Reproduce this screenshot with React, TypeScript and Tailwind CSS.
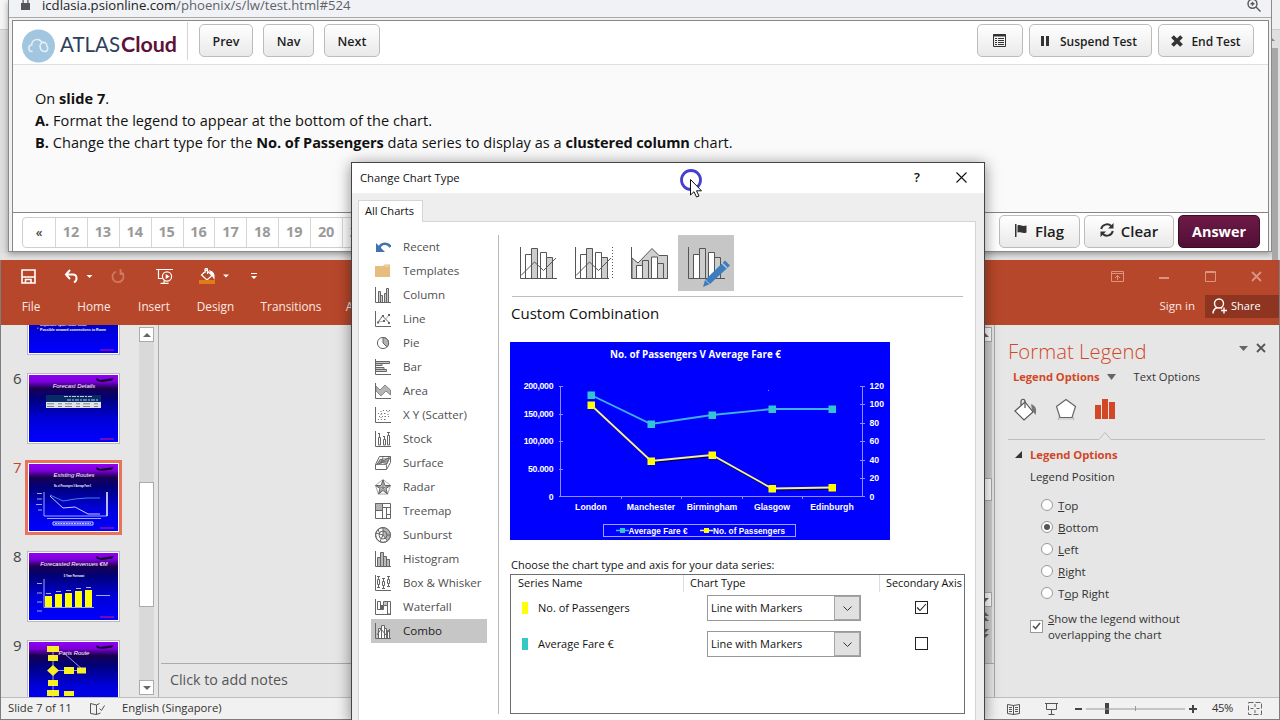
import type { ReactNode } from "react";
import clsx from "clsx";

const PAGES = ["12", "13", "14", "15", "16", "17", "18", "19", "20", "21"];

const RIBBON_TABS = [
  { label: "File", className: "w-[58px]" },
  { label: "Home", className: "w-[68px]" },
  { label: "Insert", className: "w-[52px]" },
  { label: "Design", className: "w-[71px]" },
  { label: "Transitions", className: "w-[80px]" },
  { label: "Animations", className: "w-[92px]" },
];

const CITIES = ["London", "Manchester", "Birmingham", "Glasgow", "Edinburgh"];

const SERIES = [
  { name: "No. of Passengers", swatch: "bg-[#ffff00]", secondary: true },
  { name: "Average Fare €", swatch: "bg-[#33c9c9]", secondary: false },
];

const POSITIONS: [string, string, string][] = [
  ["", "T", "op"],
  ["", "B", "ottom"],
  ["", "L", "eft"],
  ["", "R", "ight"],
  ["T", "o", "p Right"],
];

/* ---------- chart type icons ---------- */

const AXES = <path d="M.5 0v15.5H16" />;

const CHART_TYPES: { label: string; icon: ReactNode }[] = [
  {
    label: "Recent",
    icon: (
      <>
        <path d="M1 4v9h9L7 10 4 7z" fill="#3f74ad" stroke="none" />
        <path d="M4 9.500c2-6 9-6 11.500-1.500" stroke="#3f74ad" strokeWidth="2.600" />
      </>
    ),
  },
  {
    label: "Templates",
    icon: (
      <g stroke="none">
        <path fill="#e6bd7c" d="M0 3h8l1.500-1.500H15V14H0z" />
        <path fill="#f4dcb0" d="M9 3.500h5v-1H10z" />
      </g>
    ),
  },
  {
    label: "Column",
    icon: (
      <>
        {AXES}
        <path fill="#c9c9c9" d="M3.500 15V4.500h2V15M5.500 15V8.500h2V15M9.500 15V6.500h2V15M11.500 15V1.500h2V15" />
      </>
    ),
  },
  {
    label: "Line",
    icon: (
      <>
        {AXES}
        <path d="M2.500 12l5-7 7 7" />
        <path stroke="#a3a3a3" d="M3 11l6-1 5-6" />
        <path fill="#666" stroke="none" d="M2 10.500h2v2H2zM7 4h2v2H7zM13 11h2v2h-2zM13 3h2v2h-2zM8 9h2v2H8z" />
      </>
    ),
  },
  {
    label: "Pie",
    icon: (
      <>
        <circle cx="8" cy="8" r="5.600" fill="#fff" />
        <path fill="#b3b3b3" d="M8 2.400V8l4 4A5.600 5.600 0 0 0 8 2.400z" />
      </>
    ),
  },
  {
    label: "Bar",
    icon: (
      <>
        {AXES}
        <path fill="#c9c9c9" d="M1 2.500h13.500v2H1M1 4.500h6v2H1M1 8.500h8v2H1M1 10.500h10.500v2H1" />
      </>
    ),
  },
  {
    label: "Area",
    icon: (
      <>
        <path fill="#b5b5b5" stroke="#888" d="M1 3l4 4 5-5 5.500 5v5L11 8l-5 5-5-5z" />
        {AXES}
      </>
    ),
  },
  {
    label: "X Y (Scatter)",
    icon: (
      <>
        {AXES}
        <path
          stroke="#777"
          strokeDasharray="1 2"
          d="M3 12.500h9M4 9.500h11M3 6.500h8M8 3.500h8M6 11v-8M10 13v-9M13 8v-6"
        />
      </>
    ),
  },
  {
    label: "Stock",
    icon: (
      <>
        {AXES}
        <path fill="#fff" d="M3.500 6.500h2V14h-2zM8.500 8.500h2V14h-2zM12.500 4.500h2V14h-2z" />
        <path d="M4.500 2v4M9.500 5v3M13.500 1v3M3 2.500h2M8 5.500h2M12 1.500h3" />
      </>
    ),
  },
  {
    label: "Surface",
    icon: (
      <>
        <path fill="#fff" d="M.5 9.500l4-8h11v6l-4 7H.5z" />
        <path fill="#bbb" d="M2 9.500l3-5 4 1 5-3-2 6-5-1z" />
        <path d="M.5 9.500h11v5M11.500 9.500l4-8M5 4.500l8-1M4 7l8-1M8 2L6 9" strokeWidth=".8" />
      </>
    ),
  },
  {
    label: "Radar",
    icon: (
      <>
        <path d="M8 .5l7.500 5.800-2.800 8.700H3.300L.5 6.300z" strokeWidth=".7" stroke="#888" />
        <path fill="#c4c4c4" d="M8 1l2 5.500 5.500 0L11 9.500l1.500 5.500L8 11.500 3.500 15 5 9.500.5 6.500 6 6.500z" />
        <path d="M8 1v8M1 6.500L8 9l7-2.500M4 14.500L8 9l4 5.500" strokeWidth=".7" />
      </>
    ),
  },
  {
    label: "Treemap",
    icon: (
      <>
        <path fill="#fff" d="M.5 .5h15v15H.5z" />
        <path fill="#b3b3b3" d="M.5 .5h7v7h-7z" />
        <path d="M7.500 .5v15M.5 7.500h7M7.500 4.500h8M11.500 4.500v11M11.500 11.500h4" />
      </>
    ),
  },
  {
    label: "Sunburst",
    icon: (
      <>
        <circle cx="8" cy="8" r="7.400" fill="#fff" />
        <path fill="#b3b3b3" stroke="none" d="M8 .6A7.400 7.400 0 0 1 12.500 14L8 8z" />
        <circle cx="8" cy="8" r="7.400" />
        <circle cx="8" cy="8" r="4" />
        <path d="M8 .6V8l4.500 6M8 8L5 14.500M8 8L1 6M4.500 6L3 2.500M12 8h3.400" />
      </>
    ),
  },
  {
    label: "Histogram",
    icon: (
      <>
        {AXES}
        <path fill="#b9b9b9" d="M2.500 15V6.500h3V15M5.500 15V1.500h3V15M8.500 15V5.500h3V15M11.500 15V8.500h3V15" />
      </>
    ),
  },
  {
    label: "Box & Whisker",
    icon: (
      <>
        {AXES}
        <path d="M2 1.500h3M3.500 2v2M3.500 10v3M2 12.500h3M7 3.500h3M8.500 4v2M8.500 11v2M7 13.500h3M12 1.500h3M13.500 2v2M13.500 9v3M12 11.500h3" />
        <path fill="#fff" d="M2.500 4.500h2v5h-2zM7.500 6.500h2v4h-2zM12.500 4.500h2v4h-2z" />
      </>
    ),
  },
  {
    label: "Waterfall",
    icon: (
      <>
        {AXES}
        <path fill="#fff" d="M2.500 2.500h3v8h-3zM12.500 2.500h3V15h-3z" />
        <path fill="#666" d="M5.500 6.500h3v4h-3z" />
        <path fill="#c4c4c4" d="M8.500 2.500h4v4h-4z" />
      </>
    ),
  },
  {
    label: "Combo",
    icon: (
      <>
        {AXES}
        <path fill="#fff" d="M3.500 15V5.500h3V15M6.500 15V2.500h3V15M9.500 15V5.500h2V15M12.500 15V7.500h2V15" />
        <path d="M2 12l4-6 5 6 4-6" />
      </>
    ),
  },
];

/* ---------- shared bits ---------- */

const GREY_BTN = "border-[#bcbcbc] bg-linear-to-b from-white to-[#e9e9e9]";

function WebButton({ children, className }: { children: ReactNode; className?: string }) {
  return (
    <button
      className={clsx(
        "flex h-[33px] items-center justify-center rounded-[5px] border font-semibold text-[#1d1d1d]",
        className,
      )}
    >
      {children}
    </button>
  );
}

function ScrollArrow({ down }: { down?: boolean }) {
  return (
    <div className="flex h-[15px] w-[15px] shrink-0 items-center justify-center border border-[#ababab] bg-white">
      <svg width="8" height="4" className={down ? "rotate-180" : ""}>
        <path d="M0 4L4 0l4 4z" fill="#666" />
      </svg>
    </div>
  );
}

/* ---------- exam window ---------- */

function Logo() {
  return (
    <svg width="160" height="38" viewBox="0 0 160 38">
      <circle cx="18.500" cy="20" r="16.500" fill="#a3c6e0" />
      <g fill="none" stroke="#e4f0f8" strokeWidth="1.500" strokeLinecap="round">
        <path d="M12 25.500c-4 0-4.500-6-.3-6.500 0-6 8-7.500 10-2.500 3-1 5.500 1 5 3.500 2 1.500 1 5.500-1.500 5.500-3 0-5-2-5-5" />
        <path d="M20 20.500c0-3 2-4.500 4-4" />
      </g>
      <g fontFamily="Lato" fontSize="20.500">
        <text x="40" y="26" fill="#2d3f5c" textLength="60" lengthAdjust="spacingAndGlyphs">
          ATLAS
        </text>
        <text x="101" y="26" fill="#5d1238" fontWeight="bold" textLength="56" lengthAdjust="spacingAndGlyphs">
          Cloud
        </text>
      </g>
    </svg>
  );
}

function ExamHeader() {
  return (
    <header className="flex h-[44px] items-start border-b border-[#e0e0e0] bg-white text-[12.500px]">
      <div className="ml-[7px] mt-[5px] w-[158px]">
        <Logo />
      </div>
      <div className="ml-[9px] mt-px h-[38px] w-px bg-[#d4d4d4]" />
      <div className="ml-[11px] mt-[3px] flex">
        <WebButton className={clsx("w-[54px] pt-[3px]", GREY_BTN)}>Prev</WebButton>
        <WebButton className={clsx("ml-[10px] w-[51px] pt-[3px]", GREY_BTN)}>Nav</WebButton>
        <WebButton className={clsx("ml-[10px] w-[56px] pt-[3px]", GREY_BTN)}>Next</WebButton>
      </div>
      <div className="ml-auto mr-[14px] mt-[3px] flex gap-[6px] text-[12px]">
        <WebButton className={clsx("w-[46px] pr-[2px]", GREY_BTN)}>
          <svg width="13" height="13" fill="none" stroke="#333">
            <path d="M.5 .5h12v12H.5z" />
            <path d="M0 1.500h13" strokeWidth="2" />
            <path d="M2 4.500h2M5 4.500h6M2 6.500h2M5 6.500h6M2 8.500h2M5 8.500h6M2 10.500h2M5 10.500h6" />
          </svg>
        </WebButton>
        <WebButton className={clsx("w-[123px] pt-[2px]", GREY_BTN)}>
          <svg width="8" height="10" fill="#333" className="-mt-px -ml-[3px] mr-[11px]">
            <path d="M0 0h3v10H0zM5 0h3v10H5z" />
          </svg>
          Suspend Test
        </WebButton>
        <WebButton className={clsx("w-[96px] pt-[2px]", GREY_BTN)}>
          <svg width="12" height="12" className="-mt-[2px] mr-[8px]" stroke="#333" strokeWidth="3.800">
            <path d="M1.500 1.500l9 9M10.500 1.500l-9 9" />
          </svg>
          End Test
        </WebButton>
      </div>
    </header>
  );
}

function ExamFooter() {
  return (
    <footer className="flex h-[39px] items-start border-t border-[#858585] bg-white">
      <div className="ml-[9px] mt-[4px] flex h-[31px] rounded-l-[4px] border border-[#cfcfcf] text-[14.500px] font-bold text-[#9a9a9a]">
        <span className="flex w-[32px] items-center justify-center text-[12px] font-semibold text-[#444]">«</span>
        {PAGES.map((page) => (
          <span
            key={page}
            className="flex w-[31.900px] items-center justify-center border-l border-[#d6d6d6] pb-px pr-px tracking-[-0.100px]"
          >
            {page}
          </span>
        ))}
      </div>
      <div className="ml-auto mr-[8px] mt-[2px] flex gap-[4px] text-[15px]">
        <WebButton className={clsx("w-[81px]", GREY_BTN)}>
          <svg width="12" height="13" className="-mt-[2px] mr-[8px]" fill="#333">
            <path d="M0 0h1.500v13H0zM2.500 1.500c3-1.500 4 1.500 9 0v7c-4 1.500-6-1-9 0z" />
          </svg>
          Flag
        </WebButton>
        <WebButton className={clsx("w-[90px]", GREY_BTN)}>
          <svg width="14" height="14" className="-mt-[3px] mr-[7px]" fill="none" stroke="#333" strokeWidth="2">
            <path d="M1.200 6a6 6 0 0 1 10-3M12.800 8a6 6 0 0 1-10 3" />
            <path d="M13.500 0v5.500H8zM.5 14V8.500H6z" fill="#333" stroke="none" />
          </svg>
          Clear
        </WebButton>
        <WebButton className="w-[82px] border-[#3f0c28] bg-linear-to-b from-[#6d1a45] to-[#511036]">
          <span className="text-[14.400px] font-bold text-white">Answer</span>
        </WebButton>
      </div>
    </footer>
  );
}

function ExamWindow() {
  return (
    <section className="flex h-[260px] bg-[#e3e3e3]">
      <div className="h-[253px] w-[8px] shrink-0 bg-[#dedede]">
        <div className="h-[30px] border-b border-[#ccc] bg-[#f5f5f5]" />
      </div>
      <div className="h-[252px] w-[1264px] border-x border-b border-[#8a8a8a] bg-[#f0f1f2] shadow-[0_2px_6px_rgba(0,0,0,0.35)]">
        <div className="flex h-[18px] items-start border-b border-[#a9a9a9] bg-[#f0f2f6] pl-[12px] text-[13.150px] leading-[10px] text-[#5f6368]">
          <svg width="9" height="10" className="mr-[12px]" fill="#555">
            <path d="M0 3h9v7H0zM1.500 0h1.200v3H1.500zM6.300 0h1.200v3H6.300z" />
          </svg>
          <span>
            <span className="text-[#222]">icdlasia.psionline.com</span>/phoenix/s/lw/test.html#524
          </span>
          <svg width="14" height="13" className="ml-auto mr-[10px]" fill="none" stroke="#555" strokeWidth="1.400">
            <circle cx="5.500" cy="3.800" r="4.500" />
            <path d="M9 7l4.500 4.500M3.500 3.800h4M5.500 1.800v4" />
          </svg>
        </div>
        <div className="ml-[3px] mr-[2px] mt-[2px] border border-b-0 border-[#888]">
          <ExamHeader />
          <main className="h-[147px] bg-[#fafafa] pl-[22px] pt-[22px] text-[14.550px] leading-[22px] tracking-[0.030px] text-[#111]">
            <p>
              On <b>slide 7</b>.
            </p>
            <p>
              <b>A.</b> Format the legend to appear at the bottom of the chart.
            </p>
            <p>
              <b>B.</b> Change the chart type for the <b className="tracking-[-0.060px]">No. of Passengers</b> data
              series to display as a <b className="tracking-[-0.120px]">clustered column</b> chart.
            </p>
          </main>
          <ExamFooter />
        </div>
      </div>
      <div className="h-[260px] w-[8px] bg-[#e0e0e0]">
        <div className="h-[30px] border-b border-[#ccc] bg-[#f0f0f0]" />
        <svg width="6" height="18" className="block" fill="#888">
          <path d="M0 8l3 3H0z" />
        </svg>
        <div className="h-[212px] w-[6px] bg-[#a8a8a8]" />
      </div>
    </section>
  );
}

/* ---------- presentation window ---------- */

function Ribbon() {
  return (
    <header className="h-[65px] bg-[#b7472a] text-[11.800px] text-[#fbe9e3]">
      <div className="flex h-[32px] items-center pl-[20px]">
        <svg width="15" height="15" fill="none" stroke="#fff" strokeWidth="1.600">
          <path d="M1 1h13v13H1zM1 8h13M4.500 14v-3.500h5.500V14" />
        </svg>
        <svg width="27" height="15" className="ml-[28px] overflow-visible" fill="none" stroke="#fff" strokeWidth="2">
          <path d="M6 1L2 5.500 6 10M2 5.500h7c4 0 5 5.500 1 8" />
          <path d="M22.500 6h6l-3 3z" fill="#fff" stroke="none" />
        </svg>
        <svg width="14" height="15" className="ml-[20px]" fill="none" stroke="#d07862" strokeWidth="1.800">
          <path d="M5 2.500a5.500 5.500 0 1 0 5 .5M9.500 0v5H13" />
        </svg>
        <svg width="17" height="16" className="ml-[31px]" fill="none" stroke="#fff" strokeWidth="1.200">
          <path d="M0 1.500h17M2.500 2v8.500H6M8 13v2M4.500 15.300h8" />
          <circle cx="11" cy="8.500" r="4.600" />
          <path d="M9.700 6v5l4-2.500z" fill="#fff" stroke="none" />
        </svg>
        <svg width="30" height="16" className="ml-[26px]" fill="none" stroke="#fff" strokeWidth="1.200">
          <path d="M2.500 7l5-5 5.500 5.500-5 4.500zM6 5V1.500C6 0 8.500 0 8.500 1.500V6" />
          <path d="M11 3c3 1 4.500 3 4 7l-2-3z" fill="#fff" />
          <path d="M0 12h16v4H0z" fill="#e07b16" stroke="none" />
          <path d="M24 6.500h6l-3 3z" fill="#fff" stroke="none" />
        </svg>
        <svg width="6" height="8" className="ml-[22px]" fill="#fff">
          <path d="M0 1h6v1H0zM0 4h6L3 7z" />
        </svg>
        <div className="ml-auto mr-[17px] flex items-center gap-[35.500px]">
          <svg width="13" height="11" fill="none" stroke="#dc9382">
            <path d="M.5 .5h12v10H.5zM0 2.500h13M6.500 9V4.500M4 7l2.500-2.500L9 7" />
          </svg>
          <svg width="10" height="10">
            <path d="M0 6h10v2H0z" fill="#dc9382" />
          </svg>
          <svg width="11" height="11" fill="none" stroke="#dc9382">
            <path d="M.5 .5h10v10H.5zM0 1.500h11" />
          </svg>
          <svg width="11" height="11" stroke="#dc9382" strokeWidth="1.800">
            <path d="M1 1l9 9M10 1l-9 9" />
          </svg>
        </div>
      </div>
      <div className="mt-px flex h-[26px] items-center">
        <div className="flex pl-px pt-px">
          {RIBBON_TABS.map((tab) => (
            <span key={tab.label} className={clsx("flex justify-center whitespace-nowrap", tab.className)}>
              {tab.label}
            </span>
          ))}
        </div>
        <span className="ml-auto mr-[10px] text-[11.500px]">Sign in</span>
        <div className="flex h-[23px] w-[74px] items-center bg-[#8d3520] pl-[7px] text-[11px] text-white">
          <svg width="16" height="17" className="mr-[3px]" fill="none" stroke="#fff" strokeWidth="1.400">
            <circle cx="7" cy="5.500" r="4.500" />
            <path d="M1 15.500c0-3 2-5 4-6M9 9.500l1 1M12 9.500v6M9 12.500h6" />
          </svg>
          Share
        </div>
      </div>
    </header>
  );
}

function SlideArt({ title, children }: { title?: string; children?: ReactNode }) {
  return (
    <svg width="89" height="67" viewBox="0 0 89 67" className="block">
      <defs>
        <linearGradient id="slide" x1="0" y1="0" x2="0" y2="1">
          <stop offset="0" stopColor="#8f00f5" />
          <stop offset=".1" stopColor="#7d00d8" />
          <stop offset=".2" stopColor="#1a0050" />
          <stop offset=".35" stopColor="#00007a" />
          <stop offset=".65" stopColor="#0000d8" />
          <stop offset="1" stopColor="#0000ff" />
        </linearGradient>
      </defs>
      <rect width="89" height="67" fill="url(#slide)" />
      <path d="M67 3l4 2 14-2-2 2.500-10 1.500-5-1z" fill="#140030" />
      {title && (
        <text
          x="45"
          y="12.500"
          fill="#fff"
          textAnchor="middle"
          fontFamily="Liberation Sans"
          fontStyle="italic"
          fontSize="5.900"
        >
          {title}
        </text>
      )}
      {children}
      <path d="M71 64h14" stroke="#c0108c" strokeWidth="1.200" />
    </svg>
  );
}

function Thumb({ no, active, children }: { no?: string; active?: boolean; children: ReactNode }) {
  return (
    <div className="flex h-[89px] items-start">
      <span
        className={clsx(
          "-mt-[6px] w-[26px] pl-[12px] text-[15px] leading-[22px]",
          active ? "text-[#c8442b]" : "text-[#444]",
        )}
      >
        {no}
      </span>
      <div
        className={clsx(
          "bg-white",
          active ? "-ml-[2px] -mt-[2px] border-[3px] border-[#e8735a] p-px" : "border border-[#b9b9c4] p-px",
        )}
      >
        {children}
      </div>
    </div>
  );
}

function ThumbPane() {
  return (
    <aside className="flex h-[372px] w-[158px] overflow-hidden border-r border-[#ababab]">
      <div className="-mt-[41px] w-[138px]">
        <Thumb>
          <SlideArt>
            <g fill="#fff" fontFamily="Liberation Sans" fontWeight="bold" fontSize="3.600">
              <text x="11" y="40">Important sport route since</text>
              <text x="11" y="44.500">Possible onward connections to Rome</text>
              <path d="M8 41.500h1.500v1.500H8z" fill="#e04090" />
            </g>
          </SlideArt>
        </Thumb>
        <Thumb no="6">
          <SlideArt title="Forecast Details">
            <path d="M17 20h55v7H17z" fill="#0a2c66" />
            <path d="M17 27h55v6H17z" fill="#dfe3ec" />
            <path d="M35 21.500h28M38 25h32" stroke="#cdd8ee" strokeWidth=".9" strokeDasharray="4 1 2 1" />
            <path d="M18 28.800h52M18 31.500h52" stroke="#777" strokeWidth=".9" strokeDasharray="7 4 4 3" />
          </SlideArt>
        </Thumb>
        <Thumb no="7" active>
          <SlideArt title="Existing Routes">
            <text
              x="25"
              y="23"
              fill="#fff"
              fontFamily="Liberation Sans"
              fontWeight="bold"
              fontSize="3"
              textLength="37"
              lengthAdjust="spacingAndGlyphs"
            >
              No. of Passengers V Average Fare €
            </text>
            <g fill="none" stroke="#c9d2ff" strokeWidth=".8">
              <path d="M15 28v24h63V28M8 29.500h5M8 35h5M7 40.500h6M9 46h4M18 54.500h54" />
              <path stroke="#4aa8e8" d="M21 31l13 6 12-2 12-1h13" />
              <path stroke="#fff" d="M21 32l13 12 12-1 13 7h12" />
              <path d="M24 58h40v3H24z" strokeWidth="1" />
              <path d="M26 59.500h36" stroke="#fff" strokeDasharray="2 .7" />
              <path stroke="#fff" d="M78 28v24" strokeWidth="1.200" />
            </g>
          </SlideArt>
        </Thumb>
        <Thumb no="8">
          <SlideArt title="Forecasted Revenues €M">
            <text x="45" y="24" fill="#fff" textAnchor="middle" fontFamily="Liberation Sans" fontWeight="bold" fontSize="2.800">
              5 Year Forecast
            </text>
            <path d="M15 26v28.500h50M8 30.500h5M8 40h5M8 49h5M8 58h5M67 42.500h14" fill="none" stroke="#c9d2ff" strokeWidth=".8" />
            <path fill="#ff0" d="M16 43h7v11h-7zM26 41h7v13h-7zM36 40h7v14h-7zM46 38h7v16h-7zM56 37h7v17h-7z" />
            <path d="M17 40.500h5M27 38.500h5M37 37.500h5M47 35.500h5M57 34.500h5" stroke="#fff" strokeWidth=".7" />
          </SlideArt>
        </Thumb>
        <Thumb no="9">
          <SlideArt title="Paris Route">
            <path d="M24 5v52M24 28.500h30M36 12l17 15" fill="none" stroke="#a9a9ff" strokeWidth=".9" />
            <path
              fill="#f6f025"
              d="M18 4h12v6H18zM19 13h10v6H19zM24 23l6 5.500-6 5.500-6-5.500zM35 25h10v7H35zM48 25.500h9v6h-9zM19 38h10v6H19zM18 48h12v6H18zM35 49h10v5H35z"
            />
          </SlideArt>
        </Thumb>
      </div>
      <div className="mt-[2px] flex h-[368px] w-[15px] flex-col bg-[#d9d9d9]">
        <ScrollArrow />
        <div className="mt-[140px] h-[125px] border border-[#ababab] bg-white" />
        <div className="mt-auto">
          <ScrollArrow down />
        </div>
      </div>
    </aside>
  );
}

function FormatLegendPane() {
  return (
    <aside className="h-[372px] w-[285px] border-l border-[#ababab] pl-[13px] text-[12px] text-[#333]">
      <div className="flex h-[44px] items-center pt-[8px]">
        <h2 className="text-[20.300px] font-light leading-[30px] tracking-[0.060px] text-[#d24726]">Format Legend</h2>
        <svg width="9" height="5" className="-mt-[6px] ml-auto" fill="#666">
          <path d="M0 0h9L4.500 5z" />
        </svg>
        <svg width="10" height="10" className="-mt-[6px] ml-[8px] mr-[13px]" stroke="#555" strokeWidth="1.800">
          <path d="M1 1l8 8M9 1L1 9" />
        </svg>
      </div>
      <div className="flex h-[16px] items-center pl-[5px] text-[11.200px]">
        <b className="tracking-[-0.050px] text-[#d24726]">Legend Options</b>
        <svg width="9" height="6" className="ml-[7px] mr-[18px]" fill="#666">
          <path d="M0 0h9L4.500 6z" />
        </svg>
        Text Options
      </div>
      <div className="flex h-[54px] items-start pl-[6px] pt-[13px]">
        <svg width="25" height="24" fill="#fff" stroke="#555" strokeWidth="1.200">
          <path d="M17 6c5 2 6 5 4.500 11L18 12z" fill="#777" stroke="none" />
          <path d="M1 13l10-9 8 10-9 8z" />
          <path d="M7 7V3.500c0-3 4-3 4 0V10" fill="none" />
        </svg>
        <svg width="22" height="24" className="ml-[16px]" fill="none" stroke="#666" strokeWidth="1.200">
          <path d="M3 22l1-3h14l1 3" fill="#d4d4d4" stroke="#bbb" />
          <path d="M11 1.500l9.500 7-3.500 11H5L1.500 8.500z" fill="#fff" />
        </svg>
        <svg width="21" height="22" className="ml-[18px]" fill="#d24726">
          <path d="M0 7h6v14H0zM7 1h6v20H7zM14 4h6v17h-6z" />
        </svg>
      </div>
      <svg width="258" height="9" fill="none" stroke="#bdbdbd" className="-mt-[8px] block">
        <path d="M0 8.500h91l6-7 6 7h154" />
      </svg>
      <div className="ml-[7px] mt-[5px] flex h-[20px] items-center text-[11.300px]">
        <svg width="7" height="7" fill="#333" className="-mt-[2px] mr-[8px]">
          <path d="M7 0v7H0z" />
        </svg>
        <b className="tracking-[-0.050px] text-[#d24726]">Legend Options</b>
      </div>
      <p className="ml-[22px] mt-[2px] text-[11.400px] leading-[20px]">Legend Position</p>
      <div className="ml-[33px] mt-[8px]">
        {POSITIONS.map(([before, key, after]) => (
          <label key={before + key + after} className="flex h-[22px] items-center">
            <span className="-mt-[2px] mr-[5px] flex size-[12px] items-center justify-center rounded-full border border-[#999] bg-white">
              {key === "B" && <span className="size-[6px] rounded-full bg-[#555]" />}
            </span>
            <span className="text-[11.600px] text-[#333]">
              {before}
              <u>{key}</u>
              {after}
            </span>
          </label>
        ))}
      </div>
      <label className="ml-[22px] mt-[6px] flex items-center text-[11.400px] leading-[16px]">
        <span className="-mt-[2px] mr-[5px] flex size-[13px] items-center justify-center border border-[#999] bg-white">
          <svg width="9" height="8" fill="none" stroke="#555" strokeWidth="1.600">
            <path d="M1 4l2.500 2.500L8 1" />
          </svg>
        </span>
        <span>
          <u>S</u>how the legend without
          <br />
          overlapping the chart
        </span>
      </label>
    </aside>
  );
}

function StatusBar() {
  return (
    <footer className="flex h-[22px] items-center border-t border-[#bdbdbd] bg-[#f1f1f1] text-[11.250px] text-[#333]">
      <span className="ml-[7px] w-[82px]">Slide 7 of 11</span>
      <svg width="15" height="12" fill="none" stroke="#555">
        <path d="M6.500 2v9.500M6.500 2L.5 .5v10l6 1 4-1.500M6.500 2l3-1.500M9.500 5.500l2 2 3-5" />
      </svg>
      <span className="ml-[17px]">English (Singapore)</span>
      <div className="ml-auto mr-[17px] flex items-center">
        <svg width="13" height="12" fill="none" stroke="#555">
          <path d="M.5 1.500l6 1 6-1v9l-6 1-6-1zM6.500 2v10M2 4.500h3M2 6.500h3M2 8.500h3M8 4.500h3M8 6.500h3M8 8.500h3" />
        </svg>
        <svg width="13" height="12" className="ml-[25px]" fill="none" stroke="#555">
          <path d="M0 .5h13M1.500 1v5.500h10V1M6.500 7v4M3.500 11.500h6" />
        </svg>
        <svg width="122" height="13" className="ml-[17px]" fill="#444">
          <path d="M0 6h7v2H0zM30 1h4v11h-4zM114 6h8v2h-8zM117 3h2v8h-2z" />
          <path d="M11 6.500h99v1H11zM60 4h1v5h-1z" fill="#999" />
        </svg>
        <span className="ml-[15px] tracking-[-0.400px]">45%</span>
        <svg width="14" height="13" className="ml-[15px]" fill="none" stroke="#666">
          <path d="M.5 .5h13v12H.5z" strokeDasharray="5 2" />
          <path d="M7 2v3M7 8v3M2.500 6.500h3M8.500 6.500h3" />
        </svg>
      </div>
    </footer>
  );
}

function PresentationWindow() {
  return (
    <section className="h-[460px] border-x border-b border-[#7d7d7d] bg-[#e6e6e6]">
      <Ribbon />
      <div className="flex h-[372px]">
        <ThumbPane />
        <div className="ml-[2px] flex flex-1">
          <div className="flex flex-1 flex-col">
            <div className="flex h-[338px]">
              <div className="ml-auto mr-[2px] mt-[2px] flex w-[15px] flex-col bg-[#cfcfcf]">
                <ScrollArrow />
                <div className="mt-[136px] h-[23px] border border-[#ababab] bg-white" />
                <div className="mt-[91px]">
                  <ScrollArrow down />
                </div>
                <svg width="15" height="32" className="mt-[3px]" fill="#666">
                  <path d="M4 6l4-4 4 4zM4 11l4-4 4 4zM4 19h8l-4 4zM4 24h8l-4 4z" />
                </svg>
              </div>
            </div>
            <p className="border-t border-[#ababab] pl-[9px] text-[14.250px] leading-[32px] text-[#555]">
              Click to add notes
            </p>
          </div>
          <FormatLegendPane />
        </div>
      </div>
      <StatusBar />
    </section>
  );
}

/* ---------- dialog ---------- */

function ComboIcon({ kind }: { kind: "line" | "secondary" | "area" | "custom" }) {
  if (kind === "area") {
    return (
      <svg width="38" height="33" fill="none" stroke="#555">
        <path d="M1 11l6 5L21 1.500 28 8.500h8.500v23H1z" fill="#d0d0d0" />
        <path d="M.5 0v31.500H37" />
        <path d="M5.500 31V18.500h6V31M20.500 31v-21h6V31" fill="#fff" />
        <path d="M11.500 31V13.500h6V31M26.500 31V16.500h6V31" fill="#d0d0d0" />
      </svg>
    );
  }
  return (
    <svg width="43" height="40" fill="none" stroke="#555" className="overflow-visible">
      <path d={kind === "secondary" ? "M.5 0v31.500H34" : "M.5 0v31.500H37"} />
      <path d="M5.500 31V7.500h6V31M20.500 31V5.500h6V31" fill="#fff" />
      <path d="M11.500 31V1.500h6V31M26.500 31V10.500h6V31" fill="#cdcdcd" />
      {kind !== "custom" && <path d="M1 28.500L14.500 15 23.500 23.500 36 11" />}
      {kind === "secondary" && <path d="M37.500 0v32" strokeDasharray="1 2" />}
      {kind === "custom" && (
        <g stroke="none">
          <path d="M15 40l2-7L37 13.500l5 5-20 18.500z" fill="#3d7dbf" />
          <path d="M34 16l5 5" stroke="#c6c6c6" strokeWidth="1.500" />
          <path d="M17.500 33l4.500 4.500" stroke="#c6c6c6" />
        </g>
      )}
    </svg>
  );
}

function PreviewChart() {
  const xs = [81, 141, 202, 262, 322];
  const fare = [53, 82, 73, 67, 67];
  const pax = [63, 119, 113, 146.5, 145.5];
  const points = (ys: number[]) => ys.map((y, i) => `${xs[i]},${y}`).join(" ");

  return (
    <svg width="380" height="198" className="mt-[17px] block bg-[#0000ff]" fill="#fff">
      <text
        x="100"
        y="16"
        fontFamily="Open Sans"
        fontWeight="700"
        fontSize="11"
        textLength="171"
        lengthAdjust="spacingAndGlyphs"
      >
        No. of Passengers V Average Fare €
      </text>
      <path
        fill="none"
        stroke="#8d8dff"
        d="M50.500 44v110.500h302V44M49 44.500h4M49 72.500h4M49 99.500h4M49 127.500h4M49 154.500h4M350 44.500h5M350 62.500h5M350 81.500h5M350 99.500h5M350 118.500h5M350 136.500h5M350 154.500h5M111.500 154v3M171.500 154v3M232.500 154v3M292.500 154v3"
      />
      <g fontFamily="Liberation Sans" fontWeight="bold" fontSize="8.700">
        {["200,000", "150,000", "100,000", "50.000", "0"].map((t, i) => (
          <text key={t} x="43.500" y={47 + i * 27.7} textAnchor="end" textLength={t === "0" ? undefined : t.length * 4.25}>
            {t}
          </text>
        ))}
        {["120", "100", "80", "60", "40", "20", "0"].map((t, i) => (
          <text key={t} x="359.500" y={47 + i * 18.45}>
            {t}
          </text>
        ))}
        {CITIES.map((t, i) => (
          <text key={t} x={xs[i]} y="168" textAnchor="middle">
            {t}
          </text>
        ))}
      </g>
      <polyline points={points(pax)} fill="none" stroke="#00005a" strokeWidth="1.500" transform="translate(1 1.500)" />
      <polyline points={points(fare)} fill="none" stroke="#3fb2ee" strokeWidth="1.800" />
      <polyline points={points(pax)} fill="none" stroke="#f6f08a" strokeWidth="1.800" />
      {xs.map((x, i) => (
        <g key={x}>
          <rect x={x - 3.5} y={fare[i] - 3.5} width="7.500" height="7.500" fill="#33c4d4" />
          <rect x={x - 3.5} y={pax[i] - 3.5} width="7.500" height="7.500" fill="#ffff00" />
        </g>
      ))}
      <path d="M258 48.500h1" stroke="#88f" />
      <rect x="93.500" y="182.500" width="192" height="12" fill="none" stroke="#a0a0ff" />
      <path d="M106 188.500h13" stroke="#3fb2ee" strokeWidth="1.500" />
      <path d="M110 186h5v5h-5z" fill="#33c4d4" />
      <path d="M190 188.500h13" stroke="#f6f08a" strokeWidth="1.500" />
      <path d="M194 186h5v5h-5z" fill="#ff0" />
      <g fontFamily="Liberation Sans" fontWeight="bold" fontSize="8.200">
        <text x="118.500" y="191.500" textLength="59">
          Average Fare €
        </text>
        <text x="203" y="191.500" textLength="72">
          No. of Passengers
        </text>
      </g>
    </svg>
  );
}

function SeriesTable() {
  return (
    <div className="h-[140px] w-[455px] border border-[#6e6e6e] text-[11px] text-[#111]">
      <div className="flex h-[15px] items-center pt-[2px]">
        <span className="w-[173px] border-r border-[#ddd] pl-[7px]">Series Name</span>
        <span className="w-[196px] border-r border-[#ddd] pl-[6px]">Chart Type</span>
        <span className="whitespace-nowrap pl-[6px] text-[10.800px]">Secondary Axis</span>
      </div>
      {SERIES.map((s) => (
        <div key={s.name} className="flex h-[36px] items-center">
          <span className={clsx("ml-[11px] h-[12px] w-[6px]", s.swatch)} />
          <span className="ml-[10px] w-[169px]">{s.name}</span>
          <div className="flex h-[26px] w-[154px] items-stretch border border-[#999]">
            <span className="flex flex-1 items-center bg-white pl-[3px]">Line with Markers</span>
            <span className="flex w-[26px] items-center justify-center border border-[#a5a5a5] bg-[#e1e1e1]">
              <svg width="9" height="5" fill="none" stroke="#333">
                <path d="M.5 .5l4 4 4-4" />
              </svg>
            </span>
          </div>
          <span className="-mt-px ml-[54px] flex size-[13px] items-center justify-center border border-[#222] bg-white">
            {s.secondary && (
              <svg width="11" height="9" fill="none" stroke="#222" strokeWidth="1.100">
                <path d="M1 4.500l3 3L10 1" />
              </svg>
            )}
          </span>
        </div>
      ))}
    </div>
  );
}

function ChangeChartTypeDialog() {
  return (
    <div
      role="dialog"
      className="absolute left-[351px] top-[162px] h-[560px] w-[634px] border border-[#444] bg-[#eee] text-[11.300px] text-[#111] shadow-[0_2px_14px_rgba(0,0,0,0.45)]"
    >
      <div className="flex h-[30px] items-center bg-white pl-[8px]">
        <span>Change Chart Type</span>
        <span className="-mt-px ml-auto mr-[36px] text-[13px] font-semibold">?</span>
        <svg width="11" height="11" className="-mt-[2px] mr-[17px]" stroke="#111" strokeWidth="1.100">
          <path d="M.5 .5l10 10M10.500 .5l-10 10" />
        </svg>
      </div>
      <div className="relative ml-[6px] mt-[7px] flex h-[22px] w-[65px] items-center justify-center border border-b-0 border-[#d5d5d5] bg-white pr-[2px] text-[11.100px]">
        All Charts
      </div>
      <div className="-mt-px ml-[6px] flex h-[500px] w-[618px] border border-[#d5d5d5] bg-white">
        <ul className="mt-[13px] h-[479px] w-[140px] border-r border-[#b9b9b9] pl-[12px] text-[11.600px] text-[#505050]">
          {CHART_TYPES.map(({ label, icon }) => (
            <li
              key={label}
              className={clsx(
                "flex h-[24px] w-[116px] items-center whitespace-nowrap pl-[4px]",
                label === "Combo" && "bg-[#c6c6c6] text-[#222]",
              )}
            >
              <svg width="16" height="16" viewBox="0 0 16 16" fill="none" stroke="#666" className="mr-[12px] shrink-0">
                {icon}
              </svg>
              {label}
            </li>
          ))}
        </ul>
        <div className="ml-[11px] mt-[13px]">
          <div className="flex">
            <span className="flex size-[56px] items-start pl-[10px] pt-[12px]">
              <ComboIcon kind="line" />
            </span>
            <span className="flex size-[56px] items-start pl-[9px] pt-[12px]">
              <ComboIcon kind="secondary" />
            </span>
            <span className="flex size-[56px] items-start pl-[9px] pt-[12px]">
              <ComboIcon kind="area" />
            </span>
            <span className="flex size-[56px] items-start bg-[#c6c6c6] pl-[10px] pt-[12px]">
              <ComboIcon kind="custom" />
            </span>
          </div>
          <div className="ml-[2px] mt-[5px] h-px w-[451px] bg-[#bdbdbd]" />
          <h3 className="-mb-[12px] ml-px mt-[5px] text-[15px] leading-[22px]">Custom Combination</h3>
          <div className="pt-[13px]">
            <PreviewChart />
          </div>
          <p className="ml-px mt-[16px] pb-px text-[11px] leading-[17px]">
            Choose the chart type and axis for your data series:
          </p>
          <SeriesTable />
        </div>
      </div>
    </div>
  );
}

function Pointer() {
  return (
    <svg width="30" height="32" className="absolute left-[678px] top-[167px]">
      <circle cx="13" cy="13" r="9.500" fill="none" stroke="#453fd0" strokeWidth="2.800" />
      <path d="M12.500 12.500v15.500l3.500-3.300 2.500 5.300 2.500-1-2.500-5.200h5z" fill="#fff" stroke="#111" />
    </svg>
  );
}

export default function App() {
  return (
    <div className="relative h-[720px] w-[1280px] overflow-hidden bg-[#e6e6e6] font-['Open_Sans',sans-serif]">
      <ExamWindow />
      <PresentationWindow />
      <ChangeChartTypeDialog />
      <Pointer />
    </div>
  );
}
